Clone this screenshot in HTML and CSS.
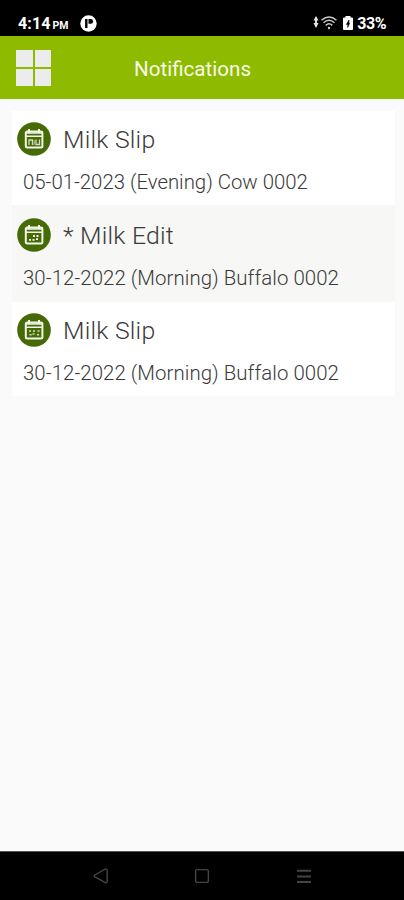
FILE: index.html
```html
<!DOCTYPE html>
<html lang="en">
<head>
<meta charset="utf-8">
<title>Notifications</title>
<link rel="stylesheet" href="styles.css">
</head>
<body>
<svg width="0" height="0" class="defs">
  <symbol id="calendar" viewBox="0 0 34 34">
    <circle cx="17" cy="17" r="16.8" fill="#466a05"/>
    <path d="M12 7v4M22 7v4" stroke="#f2f5ea" stroke-width="2"/>
    <rect x="8.800" y="9.500" width="16.600" height="16" rx="1.500" fill="none" stroke="#f2f5ea" stroke-width="2"/>
    <path d="M9 11h16M9 14.300h16" stroke="#f2f5ea" stroke-width="1.600"/>
  </symbol>
</svg>
<div class="status">
  <span class="time">4:14</span><span class="pm">PM</span>
  <svg class="app" width="17" height="17" viewBox="0 0 17 17"><circle cx="8.500" cy="8.500" r="8.200" fill="#fff"/><path d="M6.300 4v9" stroke="#000" stroke-width="2.400"/><path d="M8.500 4h2.200a2.400 2.400 0 0 1 0 4.800H8.500z" fill="#000"/></svg>
  <div class="indicators">
    <svg width="24" height="16" viewBox="0 0 24 16"><path d="M3 1l2.500 4.500H.5zM3 13L.5 8h5z" fill="#eee"/><path d="M3 4v6" stroke="#ddd" stroke-width="2"/><g fill="none" stroke="#ccc" stroke-width="1.500"><path d="M8.500 5.200Q16 -1.300 23.500 5.200M10.500 7.800Q16 2.800 21.500 7.800M12.700 10.400Q16 7.200 19.300 10.400"/></g><circle cx="16" cy="13" r="1.200" fill="#ccc"/></svg>
    <svg class="battery" width="10" height="15" viewBox="0 0 10 15"><path d="M2.500 0h5v1.500H9q1 0 1 1V13q0 1-1 1H1q-1 0-1-1V2.500q0-1 1-1h1.500z" fill="#fff"/><path d="M6 4L3.300 8.500h1.400V11.500L6.700 7.300H6z" fill="#000" stroke="#000" stroke-width=".5"/></svg>
    <span class="percent">33%</span>
  </div>
</div>
<header class="bar">
  <div class="grid"><i></i><i></i><i></i><i></i></div>
  <h1>Notifications</h1>
</header>
<main>
  <article class="item">
    <div class="head"><svg class="icon" viewBox="0 0 34 34"><use href="#calendar"/><path d="M12 23v-5h3.500V23M19 17.500v5h3.500v-5" fill="none" stroke="#d4dec2" stroke-width="1.300"/><path d="M17.200 18v5" stroke="#b9c8a0"/></svg><h2>Milk Slip</h2></div>
    <p class="cow">05-01-2023 (Evening) Cow 0002</p>
  </article>
  <article class="item alt">
    <div class="head"><svg class="icon" viewBox="0 0 34 34"><use href="#calendar"/><path d="M16 18h2M19.500 18h2M12 21.800h2M15.500 21.800h2M19 21.200h2" stroke="#f2f5ea" stroke-width="1.800"/></svg><h2>* Milk Edit</h2></div>
    <p>30-12-2022 (Morning) Buffalo 0002</p>
  </article>
  <article class="item">
    <div class="head"><svg class="icon" viewBox="0 0 34 34"><use href="#calendar"/><path d="M12 18h2M16 18h2M20.500 18h2M12.500 21.800h2M15.500 21h2M20 21.800h2" stroke="#d5dfc3" stroke-width="1.600"/></svg><h2>Milk Slip</h2></div>
    <p>30-12-2022 (Morning) Buffalo 0002</p>
  </article>
</main>
<nav>
  <svg width="16" height="16" viewBox="0 0 16 16"><path d="M1.600 7L12.200 1.200Q14.200 .8 14.200 2.600V13.400Q14.200 15.200 12.200 14.600L1.600 8.600Q.8 7.800 1.600 7z"/></svg>
  <svg width="16" height="16" viewBox="0 0 16 16"><rect x="1.600" y="1.600" width="12.800" height="12.800" rx="1.500"/></svg>
  <svg class="menu" width="16" height="16" viewBox="0 0 16 16"><path d="M1 2.800h14M1 8.600h14M1 14h14"/></svg>
</nav>
</body>
</html>
```
FILE: styles.css
```css
* { box-sizing: border-box; }
body {
  margin: 0;
  width: 404px;
  height: 900px;
  display: flex;
  flex-direction: column;
  overflow: hidden;
  background: #fafafa;
  font-family: Roboto, sans-serif;
}
h1, h2, p { margin: 0; }
.defs { display: none; }
.status {
  height: 36px;
  padding: 10px 18px 0;
  background: #000;
  color: #fff;
  display: flex;
  align-items: center;
  font-weight: 700;
}
.time { font-size: 16px; letter-spacing: 0.1px; }
.pm { font-size: 10.5px; margin: 4px 0 0 2px; }
.app { margin-left: 12px; }
.indicators { margin-left: auto; display: flex; align-items: center; }
.battery { margin-left: 6px; }
.percent { font-size: 16px; margin-left: 4px; letter-spacing: -0.5px; }
.bar {
  height: 63px;
  background: #8eba00;
  display: flex;
  align-items: center;
  padding: 1px 16px 0;
}
.grid {
  width: 35px;
  height: 36px;
  display: grid;
  grid-template-columns: 1fr 1fr;
  gap: 2px;
}
.grid i { background: #ececec; }
h1 {
  margin-left: 83px;
  padding-top: 2px;
  font-size: 20.6px;
  font-weight: 400;
  line-height: 24px;
  color: #f8fbea;
}
main { flex: 1; padding: 12px 9px 0 12px; }
.item { height: 94px; padding: 11px 0 0 5px; background: #fff; }
.alt { height: 97px; padding-top: 13px; background: #f7f7f5; }
.head { height: 34px; display: flex; align-items: center; }
.icon { width: 34px; height: 34px; flex: none; }
h2 {
  margin-left: 12px;
  padding-top: 1px;
  font-size: 24.8px;
  font-weight: 300;
  line-height: 30px;
  letter-spacing: 0.22px;
  color: #3a3a3a;
}
p {
  margin: 14px 0 0 6px;
  font-size: 20.4px;
  font-weight: 300;
  line-height: 24px;
  letter-spacing: 0.06px;
  color: #3a3a3a;
  white-space: nowrap;
}
.cow { letter-spacing: -0.02px; }
nav {
  height: 49px;
  background: #000;
  border-top: 1px solid #555;
  display: flex;
  gap: 85.5px;
  padding: 16px 0 0 92.5px;
}
nav svg { fill: none; stroke: #444; stroke-width: 1.4; }
nav .menu { stroke-width: 2; }
```
